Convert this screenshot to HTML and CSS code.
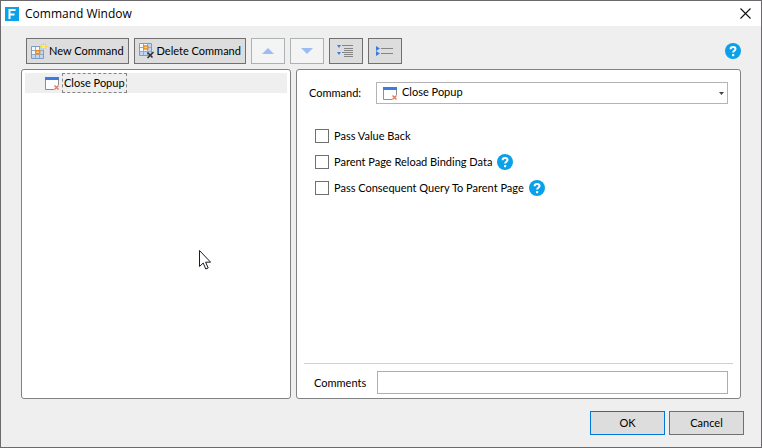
FILE: index.html
```html
<!DOCTYPE html>
<html lang="en">
<head>
<meta charset="utf-8">
<title>Command Window</title>
<link rel="stylesheet" href="styles.css">
</head>
<body>
<svg class="defs" aria-hidden="true">
  <symbol id="help" viewBox="0 0 16 16"><circle cx="8" cy="8" r="8" fill="#0aa0ea"/><path d="M5.6 6.2C5.6 4.600 6.600 3.900 8.100 3.900c1.500 0 2.400.8 2.400 2 0 1.800-2.400 1.800-2.400 3.700" fill="none" stroke="#fff" stroke-width="2"/><rect x="7" y="11" width="2.200" height="2.200" rx=".6" fill="#fff"/></symbol>
  <symbol id="popup" viewBox="0 0 15 13"><path d="M1 3h12v9H1z" fill="#fff"/><path d="M.5 3v9.500H9M13.500 3v5" fill="none" stroke="#8f8f8f"/><path d="M0 0h14v3H0z" fill="#3c7be0"/><path d="M9.500 8.500l4 4m0-4l-4 4" stroke="#e2785a" stroke-width="1.400"/></symbol>
  <symbol id="grid" viewBox="0 0 16 16"><path d="M.5 3.500h12v12H.5z" fill="#f4f9ff" stroke="#7d9cc2"/><path d="M1 12h11v3H1zM9 4h3v11H9z" fill="#bfd7f2"/><path d="M1 7.500h11M1 11.500h11M4.500 4v11M8.500 4v11" stroke="#8eabce"/><path d="M4.700 7.700h4v3h-4z" fill="#ffd98a" stroke="#f08a16" stroke-width="1.400"/></symbol>
  <symbol id="grid-delete" viewBox="0 0 16 16"><path d="M.5.5h12v12H.5z" fill="#f4f9ff" stroke="#7d9cc2"/><path d="M1 9h11v3H1zM9 1h3v11H9z" fill="#bfd7f2"/><path d="M1 4.500h11M1 8.500h11M4.500 1v11M8.500 1v11" stroke="#8eabce"/><path d="M4.700 3h4v3h-4z" fill="#ffd98a" stroke="#f08a16" stroke-width="1.400"/><path d="M8.500 9.500l5 5m1-5.500l-6 6" stroke="#333" stroke-width="1.600"/></symbol>
</svg>
<main class="window">
  <header class="titlebar">
    <svg class="logo" width="14" height="14" viewBox="0 0 14 14" aria-hidden="true"><path d="M0 0h14v14H0z" fill="#0aa2e8"/><path d="M4.500 12V3h6M4.500 7.500h5" fill="none" stroke="#fff" stroke-width="2"/></svg>
    <h1>Command Window</h1>
    <button class="close" aria-label="Close"><svg width="11" height="11" viewBox="0 0 11 11"><path d="M.5.5l10 10m0-10l-10 10" stroke="#111" stroke-width="1.100"/></svg></button>
  </header>
  <div class="toolbar">
    <button class="tool"><svg width="16" height="16"><use href="#grid"/><path d="M12.500 0v7M9 3.500h7M10 1l5 5m0-5l-5 5" stroke="#ffc81c"/><circle cx="12.500" cy="3.500" r="1.700" fill="#fff15a"/></svg>New Command</button>
    <button class="tool"><svg width="16" height="16"><use href="#grid-delete"/></svg>Delete Command</button>
    <button class="tool small" disabled aria-label="Move up"><svg width="12" height="6"><path d="M6 0l6 6H0z" fill="#9dbcf2"/></svg></button>
    <button class="tool small" disabled aria-label="Move down"><svg width="12" height="6"><path d="M6 6l6-6H0z" fill="#9dbcf2"/></svg></button>
    <button class="tool small" aria-label="Expand all"><svg width="17" height="12" viewBox="0 0 17 12"><path d="M0 0h4L2 3zM0 7h4l-2 3z" fill="#3c7be0"/><path d="M5 .5h11M7 3.500h9M7 5.500h9M5 7.500h11M7 9.500h9M7 11.500h9" stroke="#858585"/></svg></button>
    <button class="tool small" aria-label="Collapse all"><svg width="17" height="10" viewBox="0 0 17 10"><path d="M0 0l4 2.500L0 5zM0 5l4 2.500L0 10z" fill="#3c7be0"/><path d="M5 2.500h12M5 7.500h12" stroke="#858585"/></svg></button>
    <button class="help" aria-label="Help"><svg width="16" height="16"><use href="#help"/></svg></button>
  </div>
  <div class="panels">
    <section class="panel commands" aria-label="Commands">
      <a class="item" href="#"><svg width="15" height="13"><use href="#popup"/></svg><span>Close Popup</span></a>
    </section>
    <section class="panel details" aria-label="Command details">
      <div class="field">
        <label for="command">Command:</label>
        <div class="picker">
          <select id="command"><option>Close Popup</option></select>
          <svg class="picker-icon" width="15" height="13"><use href="#popup"/></svg>
          <svg class="picker-arrow" width="5" height="3"><path d="M0 0h5L2.500 3z" fill="#444"/></svg>
        </div>
      </div>
      <div class="options">
        <div class="option"><label><input type="checkbox">Pass Value Back</label></div>
        <div class="option"><label><input type="checkbox">Parent Page Reload Binding Data</label><button class="help" aria-label="Help on reloading"><svg width="16" height="16"><use href="#help"/></svg></button></div>
        <div class="option"><label><input type="checkbox">Pass Consequent Query To Parent Page</label><button class="help" aria-label="Help on queries"><svg width="16" height="16"><use href="#help"/></svg></button></div>
      </div>
      <div class="comments">
        <label for="comments">Comments</label>
        <input id="comments" type="text">
      </div>
    </section>
  </div>
  <footer class="actions">
    <button class="action primary">OK</button>
    <button class="action">Cancel</button>
  </footer>
  <svg class="pointer" width="12" height="20" viewBox="0 0 12 20" aria-hidden="true"><path d="M.5.5v16l3.700-3.500 2.600 6 2.400-1-2.600-5.800h5z" fill="#fff" stroke="#1b1b26"/></svg>
</main>
</body>
</html>
```

FILE: styles.css
```css
* { box-sizing: border-box; }
body {
  margin: 0;
  background: #efefef;
  color: #000;
  font: 11px/16px Lato, sans-serif;
}
button, input, select { font: inherit; color: inherit; border-radius: 0; }
button { padding: 0; }
svg { display: block; flex: none; }
.defs { position: absolute; width: 0; height: 0; }
.window {
  position: relative;
  display: flex;
  flex-direction: column;
  min-height: 100vh;
  border: 1px solid #6c6a6c;
}
.titlebar {
  display: flex;
  align-items: center;
  gap: 6px;
  height: 25px;
  padding: 0 10px 0 4px;
  background: #fff;
}
.titlebar h1 { margin: 0; font: 12px/16px "Open Sans", sans-serif; }
.close { margin-left: auto; border: 0; background: none; }
.toolbar {
  display: flex;
  align-items: center;
  gap: 5px;
  padding: 12px 20px 5px 25px;
}
.tool {
  display: flex;
  align-items: center;
  gap: 2px;
  height: 26px;
  padding: 0 4px;
  border: 1px solid #707070;
  background: #ddd;
}
.small { width: 34px; justify-content: center; }
.tool:disabled { border-color: #adb2b5; background: #f4f4f4; }
.help { border: 0; background: none; }
.toolbar .help { margin-left: auto; }
.panels {
  flex: 1;
  display: grid;
  grid-template-columns: 270fr 445fr;
  gap: 5px;
  padding: 0 20px;
}
.panel {
  padding: 3px;
  border: 1px solid #828282;
  border-radius: 3px;
  background: #fff;
}
.item {
  display: flex;
  align-items: center;
  gap: 2px;
  height: 20px;
  padding-left: 20px;
  background: #efefef;
  color: inherit;
  text-decoration: none;
}
.item span { padding: 1px; border: 1px dashed #858585; }
.details {
  display: flex;
  flex-direction: column;
  padding: 12px 7px 4px;
}
.field { display: flex; align-items: center; padding: 0 5px; }
.field label { width: 67px; }
.picker { position: relative; flex: 1; }
.picker select {
  display: block;
  width: 100%;
  height: 22px;
  padding: 0 20px 2px 25px;
  border: 1px solid #b4b4b8;
  appearance: none;
  background: #fff;
}
.picker-icon { position: absolute; left: 7px; top: 5px; pointer-events: none; }
.picker-arrow { position: absolute; right: 4px; top: 10px; pointer-events: none; }
.options { padding: 19px 11px; }
.option { display: flex; align-items: center; gap: 5px; height: 26px; }
.option label { display: flex; align-items: center; gap: 5px; }
.option input {
  width: 14px;
  height: 14px;
  margin: 0;
  border: 1px solid #707070;
  appearance: none;
  background: #fff;
}
.option input:checked { background: #0078d7; }
.comments {
  display: flex;
  align-items: center;
  margin-top: auto;
  padding: 7px 5px 0 10px;
  border-top: 1px solid #d0d0d0;
}
.comments label { width: 63px; }
.comments input {
  flex: 1;
  height: 23px;
  padding: 0 4px;
  border: 1px solid #abadb3;
  background: #fff;
}
.actions {
  display: flex;
  justify-content: flex-end;
  gap: 4px;
  padding: 12px 17px;
}
.action {
  width: 75px;
  height: 24px;
  border: 1px solid #707070;
  background: #ddd;
}
.primary { border-color: #0078d7; }
.pointer { position: absolute; left: 198px; top: 249px; pointer-events: none; }
```
